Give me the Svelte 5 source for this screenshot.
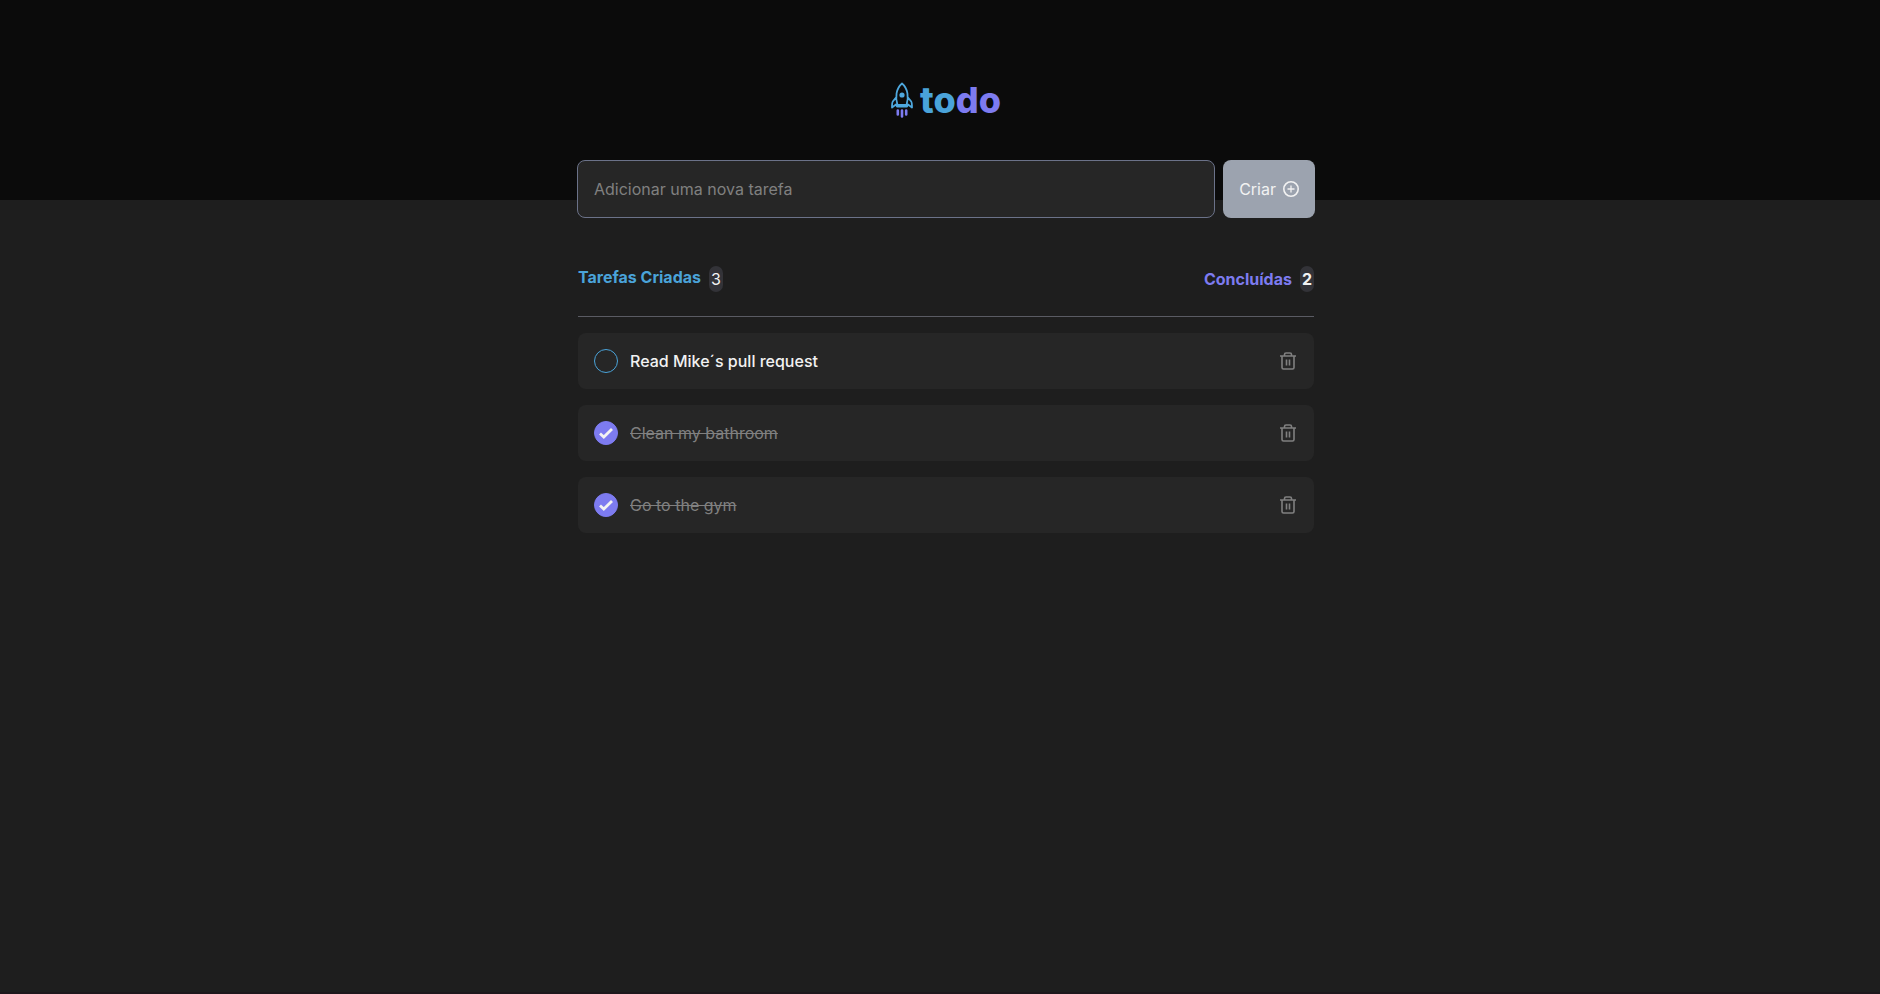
<script>
  let nextId = 4;
  let draft = $state("");
  let tasks = $state([
    { id: 1, title: "Read Mike´s pull request", done: false },
    { id: 2, title: "Clean my bathroom", done: true },
    { id: 3, title: "Go to the gym", done: true },
  ]);

  let doneCount = $derived(tasks.filter((task) => task.done).length);

  function addTask(event) {
    event.preventDefault();
    const title = draft.trim();
    if (!title) return;
    tasks.push({ id: nextId++, title, done: false });
    draft = "";
  }

  function removeTask(id) {
    tasks = tasks.filter((task) => task.id !== id);
  }
</script>

<div class="page">
  <header>
    <h1 class="logo">
      <svg width="22" height="36" viewBox="0 0 22 36" fill="none" aria-hidden="true">
        <path
          d="M6.5 23C4 15.500 5 6.500 11 1.500C17 6.500 18 15.500 15.500 23M5 23H17M5 15.500L1.800 19.500Q1 20.500 1 25.500L5 22.500L6 24.500H16L17 22.500L21 25.500Q21 20.500 20.200 19.500L17 15.500"
          stroke="#4ea8de"
          stroke-width="1.8"
          stroke-linejoin="round"
          stroke-linecap="round"
        />
        <circle cx="11" cy="13" r="2.600" fill="#4ea8de" />
        <path
          d="M6.800 28.500V32.500M11 28.500V34.500M15.200 28.500V32.500"
          stroke="#7d7bf0"
          stroke-width="2.600"
          stroke-linecap="round"
        />
      </svg>
      <span class="word"><span class="blue">to</span><span class="purple">do</span></span>
    </h1>
  </header>

  <main>
    <form onsubmit={addTask}>
      <input
        class="field"
        type="text"
        placeholder="Adicionar uma nova tarefa"
        aria-label="Adicionar uma nova tarefa"
        bind:value={draft}
      />
      <button class="create" type="submit">
        Criar
        <svg width="16" height="16" viewBox="0 0 16 16" fill="none" aria-hidden="true">
          <circle cx="8" cy="8" r="7.200" stroke="currentColor" stroke-width="1.600" />
          <path d="M8 4.500V11.500M4.500 8H11.500" stroke="currentColor" stroke-width="1.300" />
        </svg>
      </button>
    </form>

    <section>
      <div class="summary">
        <p class="created"><strong>Tarefas Criadas</strong> <span class="count">{tasks.length}</span></p>
        <p class="finished"><strong>Concluídas</strong> <span class="count">{doneCount}</span></p>
      </div>

      <ul>
        {#each tasks as task (task.id)}
          <li>
            <label class:done={task.done}>
              <input type="checkbox" bind:checked={task.done} />
              <span class="mark">
                <svg width="16" height="12" viewBox="0 0 16 12" fill="none" aria-hidden="true">
                  <path d="M2 6.500L5.800 10L14 2" stroke="#f2f2f2" stroke-width="2.800" />
                </svg>
              </span>
              <span class="title">{task.title}</span>
            </label>
            <button class="remove" type="button" aria-label="Remover" onclick={() => removeTask(task.id)}>
              <svg width="16" height="18" viewBox="0 0 16 18" fill="none" aria-hidden="true">
                <path
                  d="M0 4H16M4.500 3.500V2.500Q4.500 1 6 1H10Q11.500 1 11.500 2.500V3.500M2 4V15.500Q2 17 3.500 17H12.500Q14 17 14 15.500V4M6.500 7.500V13.500M9.500 7.500V13.500"
                  stroke="currentColor"
                  stroke-width="1.600"
                />
              </svg>
            </button>
          </li>
        {/each}
      </ul>
    </section>
  </main>
</div>

<style>
  :global(body) {
    background: #1e1e1e;
  }

  .page {
    box-sizing: border-box;
    min-height: 100vh;
    border-bottom: 2px solid #1d171c;
    background: #1e1e1e;
    color: #f2f2f2;
    font-family: Inter, "Liberation Sans", sans-serif;
    font-size: 16px;
    line-height: 24px;
  }

  header {
    display: flex;
    justify-content: center;
    align-items: center;
    height: 200px;
    padding-left: 12px;
    box-sizing: border-box;
    background: #0b0b0b;
  }

  .logo {
    display: flex;
    align-items: center;
    gap: 7px;
    margin: 0;
    font-size: 36px;
    line-height: 40px;
    font-weight: 800;
  }

  .blue {
    color: #4aa3d9;
  }

  .purple {
    color: #7d7bf0;
  }

  main {
    max-width: 736px;
    margin: -40px auto 0;
    padding-left: 12px;
  }

  form {
    display: flex;
    gap: 8px;
    margin: 0 -1px;
  }

  .field {
    flex: 1;
    min-width: 0;
    box-sizing: border-box;
    height: 58px;
    padding: 0 16px;
    border: 1px solid #6b7289;
    border-radius: 8px;
    background: #262626;
    color: #f2f2f2;
    font: inherit;
  }

  .field::placeholder {
    color: #808080;
    opacity: 1;
  }

  .create {
    display: flex;
    align-items: center;
    gap: 7px;
    padding: 0 16px;
    border: 0;
    border-radius: 8px;
    background: #9ca3af;
    color: #f2f2f2;
    font: inherit;
    cursor: pointer;
  }

  .summary {
    display: flex;
    justify-content: space-between;
    margin-top: 48px;
    padding-bottom: 24px;
    border-bottom: 1px solid #5a5b63;
  }

  .summary p {
    display: flex;
    gap: 8px;
    margin: 0;
  }

  .summary strong {
    font-weight: 700;
    line-height: 22px;
  }

  .created strong {
    color: #4aa3d9;
  }

  .finished {
    font-weight: 700;
  }

  .finished strong {
    padding-top: 2px;
    color: #7d7bf0;
  }

  .count {
    padding: 1px 2px;
    border-radius: 8px;
    background: #333338;
    color: #f2f2f2;
  }

  ul {
    display: flex;
    flex-direction: column;
    gap: 16px;
    margin: 16px 0 0;
    padding: 0;
    list-style: none;
  }

  li {
    display: flex;
    align-items: center;
    justify-content: space-between;
    padding: 16px;
    border-radius: 8px;
    background: #262626;
  }

  label {
    position: relative;
    display: flex;
    align-items: center;
    gap: 12px;
    cursor: pointer;
  }

  label input {
    position: absolute;
    width: 24px;
    height: 24px;
    margin: 0;
    opacity: 0;
    cursor: pointer;
  }

  .mark {
    display: flex;
    align-items: center;
    justify-content: center;
    box-sizing: border-box;
    width: 24px;
    height: 24px;
    border: 1px solid #4aa3d9;
    border-radius: 50%;
  }

  .mark svg {
    display: none;
  }

  .done .mark {
    border-color: #7d7bf0;
    background: #7d7bf0;
  }

  .done .mark svg {
    display: block;
  }

  .title {
    font-weight: 500;
  }

  .done .title {
    color: #808080;
    font-weight: 400;
    text-decoration: line-through;
  }

  .remove {
    display: flex;
    padding: 0 2px;
    border: 0;
    background: none;
    color: #808080;
    cursor: pointer;
  }
</style>
